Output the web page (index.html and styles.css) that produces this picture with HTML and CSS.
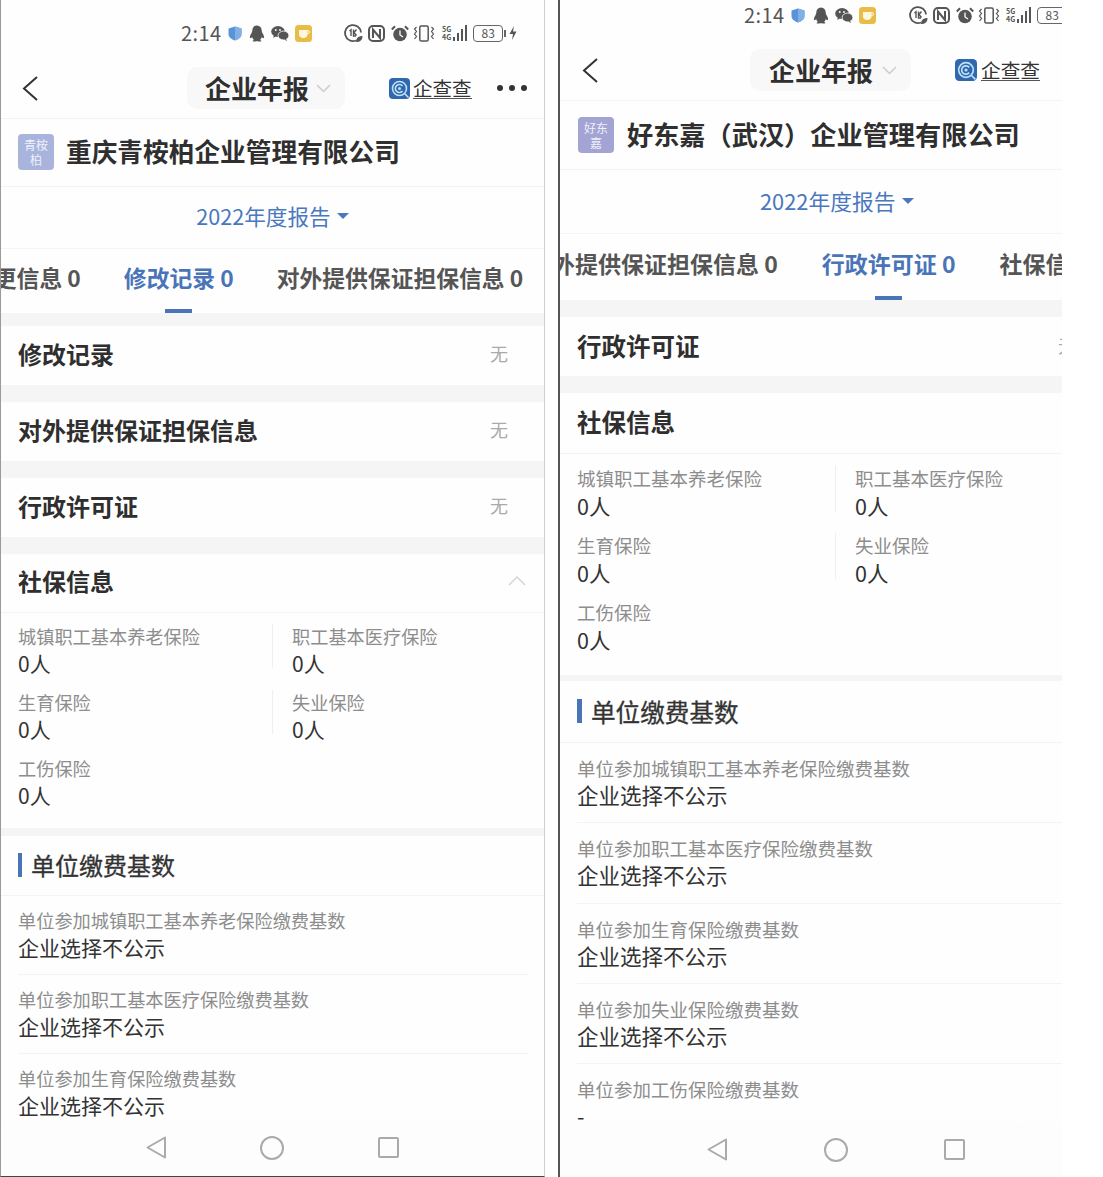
FILE: index.html
```html
<!DOCTYPE html>
<html lang="zh-CN">
<head>
<meta charset="utf-8">
<title>企业年报</title>
<link rel="stylesheet" href="styles.css">
</head>
<body>
<svg class="defs" aria-hidden="true">
  <symbol id="i-shield" viewBox="0 0 14 15"><path d="M7 .5 13.5 2.5V8c0 3.2-3 5.4-6.500 6.500C3.500 13.400.5 11.200.5 8V2.500Z" fill="#5b93d8"/><path d="M7 .5 13.500 2.500V8c0 3.200-3 5.400-6.500 6.500Z" fill="#7fb0e6"/></symbol>
  <symbol id="i-bell" viewBox="0 0 16 17"><path d="M8 .5c3 0 4.600 2.200 4.700 5 .1 1.400.6 2.300 1.300 3.600.9 1.800 1.600 3.400.6 4-.6.300-1.300-.3-1.800-1-.3 1.300-1 2.200-1.700 2.800.9.300 1.400.8 1.200 1.300-.3.500-2.500.6-3.300 0-.6.100-1.400.1-2 0-.8.600-3 .5-3.300 0-.2-.5.300-1 1.200-1.300-.7-.6-1.400-1.500-1.700-2.800-.5.700-1.200 1.300-1.800 1-1-.6-.3-2.200.6-4C2.700 7.800 3.200 6.900 3.300 5.500 3.400 2.700 5 .5 8 .5Z" fill="#555"/></symbol>
  <symbol id="i-wechat" viewBox="0 0 18 15"><ellipse cx="7" cy="5.500" rx="6.800" ry="5.400" fill="#555"/><path d="m3 9-.8 3 3.300-2Z" fill="#555"/><ellipse cx="12.500" cy="9.500" rx="5.400" ry="4.400" fill="#555" stroke="#fff" stroke-width=".8"/><path d="m15 13 1.200 2-3.200-1.500Z" fill="#555"/><circle cx="4.800" cy="4" r=".9" fill="#fff"/><circle cx="9" cy="4" r=".9" fill="#fff"/></symbol>
  <symbol id="i-coffee" viewBox="0 0 17 17"><rect width="17" height="17" rx="3.500" fill="#e9bd45"/><path d="M4 5h8.500v4.500c0 2-1.700 3.500-4.200 3.500S4 11.500 4 9.500Z" fill="#fdf6e0"/><circle cx="13" cy="7" r="1.500" fill="none" stroke="#fdf6e0"/></symbol>
  <symbol id="i-speed" viewBox="0 0 20 20"><path d="M13 17.500A8 8 0 1 1 18 9.500" fill="none" stroke="#555" stroke-width="1.800"/><path d="M6.500 8 8 6.800V13M10.500 6.500V13H13M13.500 6.500 11 9.500l2.500 3" fill="none" stroke="#555" stroke-width="1.400"/><path d="M13 19c0-4 2.500-6 6.500-6 0 4-2.500 6-6.500 6Z" fill="#555"/></symbol>
  <symbol id="i-nfc" viewBox="0 0 17 17"><rect x="1" y="1" width="15" height="15" rx="4" fill="none" stroke="#555" stroke-width="2"/><path d="M5 13V4.500L12 13V4" fill="none" stroke="#555" stroke-width="2"/></symbol>
  <symbol id="i-alarm" viewBox="0 0 18 17"><circle cx="9" cy="9.500" r="6.800" fill="#555"/><path d="M9 5.500v4.500l3 2" fill="none" stroke="#fff" stroke-width="1.300"/><path d="M.8 4.500 4 1.200M17.200 4.500 14 1.200" stroke="#555" stroke-width="2"/></symbol>
  <symbol id="i-vib" viewBox="0 0 22 17"><rect x="6.800" y="1" width="8.400" height="15" rx="1.500" fill="none" stroke="#555" stroke-width="1.500"/><path d="M3.500 2 1.500 4l2 2.500-2 2.500 2 2.500-2 2.500M18.500 2l2 2-2 2.500 2 2.500-2 2.500 2 2.500" fill="none" stroke="#555" stroke-width="1.200"/></symbol>
  <symbol id="i-bolt" viewBox="0 0 8 14"><path d="M5 0 .5 8H4L3 14l4.500-8.500H4Z" fill="#555"/></symbol>
  <symbol id="i-logo" viewBox="0 0 21 21"><rect width="21" height="21" rx="4" fill="#2f68ae"/><circle cx="10.500" cy="10.500" r="7" fill="none" stroke="#bfe0f5" stroke-width="1.600"/><path d="M13.500 8a4 4 0 1 0 0 5" fill="none" stroke="#bfe0f5" stroke-width="1.600"/><circle cx="10.500" cy="10.500" r="1.500" fill="#bfe0f5"/><path d="m15.500 15.500 4 4" stroke="#bfe0f5" stroke-width="1.600"/></symbol>
</svg>

<main class="page">

<section class="phone phone-a">
  <div class="status">
    <span class="time">2:14</span>
    <svg class="si s-shield"><use href="#i-shield"/></svg>
    <svg class="si s-bell"><use href="#i-bell"/></svg>
    <svg class="si s-wechat"><use href="#i-wechat"/></svg>
    <svg class="si s-coffee"><use href="#i-coffee"/></svg>
    <svg class="si s-speed"><use href="#i-speed"/></svg>
    <svg class="si s-nfc"><use href="#i-nfc"/></svg>
    <svg class="si s-alarm"><use href="#i-alarm"/></svg>
    <svg class="si s-vib"><use href="#i-vib"/></svg>
    <span class="net"><span class="net-t"><b>5G</b><b>4G</b></span><span class="bars"><i class="b1"></i><i class="b2"></i><i class="b3"></i><i class="b4"></i></span></span>
    <span class="batt">83</span><span class="batt-cap"></span>
    <svg class="si s-bolt"><use href="#i-bolt"/></svg>
  </div>
  <header class="nav">
    <svg class="back" viewBox="0 0 16 25"><path d="M15 1 2 12.500 15 24" fill="none" stroke="#333" stroke-width="2"/></svg>
    <div class="pill"><span>企业年报</span><svg class="pill-arrow" viewBox="0 0 15 9"><path d="M1 1l6.500 6.500L14 1" fill="none" stroke="#ccc" stroke-width="1.500"/></svg></div>
    <div class="logo"><svg class="logo-mark"><use href="#i-logo"/></svg><span>企查查</span></div>
    <div class="dots"><i></i><i></i><i></i></div>
  </header>
  <div class="company"><div class="avatar">青桉<br>柏</div><h1>重庆青桉柏企业管理有限公司</h1></div>
  <div class="report"><span>2022年度报告</span><i class="caret"></i></div>
  <nav class="tabs">
    <span class="tab">变更信息 0</span>
    <span class="tab active">修改记录 0</span>
    <span class="tab">对外提供保证担保信息 0</span>
  </nav>
  <div class="row"><h2>修改记录</h2><span class="none">无</span></div>
  <div class="row"><h2>对外提供保证担保信息</h2><span class="none">无</span></div>
  <div class="row"><h2>行政许可证</h2><span class="none">无</span></div>
  <div class="row row-open"><h2>社保信息</h2><svg class="up" viewBox="0 0 18 11"><path d="M1 10 9 2l8 8" fill="none" stroke="#d4d4d4" stroke-width="1.500"/></svg></div>
  <div class="stats">
    <div class="stat"><label>城镇职工基本养老保险</label><p>0人</p></div>
    <div class="stat"><label>职工基本医疗保险</label><p>0人</p></div>
    <div class="stat"><label>生育保险</label><p>0人</p></div>
    <div class="stat"><label>失业保险</label><p>0人</p></div>
    <div class="stat"><label>工伤保险</label><p>0人</p></div>
  </div>
  <div class="sub"><h3>单位缴费基数</h3></div>
  <div class="items">
    <div class="item"><label>单位参加城镇职工基本养老保险缴费基数</label><p>企业选择不公示</p></div>
    <div class="item"><label>单位参加职工基本医疗保险缴费基数</label><p>企业选择不公示</p></div>
    <div class="item"><label>单位参加生育保险缴费基数</label><p>企业选择不公示</p></div>
  </div>
  <div class="softnav">
    <svg class="tri" viewBox="0 0 20 23"><path d="M19 1.500 1.500 11.500 19 21.500Z" fill="none" stroke="#aaa" stroke-width="2" stroke-linejoin="round"/></svg>
    <svg class="circ" viewBox="0 0 24 24"><circle cx="12" cy="12" r="11" fill="none" stroke="#aaa" stroke-width="2"/></svg>
    <svg class="sq" viewBox="0 0 21 21"><rect x="1" y="1" width="19" height="19" rx="1" fill="none" stroke="#aaa" stroke-width="2"/></svg>
  </div>
</section>

<section class="phone phone-b">
  <div class="status">
    <span class="time">2:14</span>
    <svg class="si s-shield"><use href="#i-shield"/></svg>
    <svg class="si s-bell"><use href="#i-bell"/></svg>
    <svg class="si s-wechat"><use href="#i-wechat"/></svg>
    <svg class="si s-coffee"><use href="#i-coffee"/></svg>
    <svg class="si s-speed"><use href="#i-speed"/></svg>
    <svg class="si s-nfc"><use href="#i-nfc"/></svg>
    <svg class="si s-alarm"><use href="#i-alarm"/></svg>
    <svg class="si s-vib"><use href="#i-vib"/></svg>
    <span class="net"><span class="net-t"><b>5G</b><b>4G</b></span><span class="bars"><i class="b1"></i><i class="b2"></i><i class="b3"></i><i class="b4"></i></span></span>
    <span class="batt">83</span><span class="batt-cap"></span>
    <svg class="si s-bolt"><use href="#i-bolt"/></svg>
  </div>
  <header class="nav">
    <svg class="back" viewBox="0 0 16 25"><path d="M15 1 2 12.500 15 24" fill="none" stroke="#333" stroke-width="2"/></svg>
    <div class="pill"><span>企业年报</span><svg class="pill-arrow" viewBox="0 0 15 9"><path d="M1 1l6.500 6.500L14 1" fill="none" stroke="#ccc" stroke-width="1.500"/></svg></div>
    <div class="logo"><svg class="logo-mark"><use href="#i-logo"/></svg><span>企查查</span></div>
  </header>
  <div class="company"><div class="avatar">好东<br>嘉</div><h1>好东嘉（武汉）企业管理有限公司</h1></div>
  <div class="report"><span>2022年度报告</span><i class="caret"></i></div>
  <nav class="tabs">
    <span class="tab">对外提供保证担保信息 0</span>
    <span class="tab active">行政许可证 0</span>
    <span class="tab">社保信息 0</span>
  </nav>
  <div class="row"><h2>行政许可证</h2><span class="none">无</span></div>
  <div class="row row-open"><h2>社保信息</h2><svg class="up" viewBox="0 0 18 11"><path d="M1 10 9 2l8 8" fill="none" stroke="#d4d4d4" stroke-width="1.500"/></svg></div>
  <div class="stats">
    <div class="stat"><label>城镇职工基本养老保险</label><p>0人</p></div>
    <div class="stat"><label>职工基本医疗保险</label><p>0人</p></div>
    <div class="stat"><label>生育保险</label><p>0人</p></div>
    <div class="stat"><label>失业保险</label><p>0人</p></div>
    <div class="stat"><label>工伤保险</label><p>0人</p></div>
  </div>
  <div class="sub"><h3>单位缴费基数</h3></div>
  <div class="items">
    <div class="item"><label>单位参加城镇职工基本养老保险缴费基数</label><p>企业选择不公示</p></div>
    <div class="item"><label>单位参加职工基本医疗保险缴费基数</label><p>企业选择不公示</p></div>
    <div class="item"><label>单位参加生育保险缴费基数</label><p>企业选择不公示</p></div>
    <div class="item"><label>单位参加失业保险缴费基数</label><p>企业选择不公示</p></div>
    <div class="item"><label>单位参加工伤保险缴费基数</label><p>-</p></div>
  </div>
  <div class="softnav">
    <svg class="tri" viewBox="0 0 20 23"><path d="M19 1.500 1.500 11.500 19 21.500Z" fill="none" stroke="#aaa" stroke-width="2" stroke-linejoin="round"/></svg>
    <svg class="circ" viewBox="0 0 24 24"><circle cx="12" cy="12" r="11" fill="none" stroke="#aaa" stroke-width="2"/></svg>
    <svg class="sq" viewBox="0 0 21 21"><rect x="1" y="1" width="19" height="19" rx="1" fill="none" stroke="#aaa" stroke-width="2"/></svg>
  </div>
</section>

</main>
</body>
</html>
```
FILE: styles.css
```css
* { box-sizing: border-box; }
html, body { margin: 0; padding: 0; background: #fff; }
body { font-family: "Noto Sans CJK SC", "Noto Sans", sans-serif; color: #333; }
.defs { position: absolute; width: 0; height: 0; }

.page { display: flex; align-items: flex-start; width: 1103px; height: 1177px; overflow: hidden; }

.phone { position: relative; height: 1177px; overflow: hidden; background: #f5f5f5; flex: none; }
.phone-a { width: 545px; border-left: 1px solid #9a9a9a; border-right: 1px solid #cfcfcf; border-bottom: 1px solid #444; }
.phone-b { width: 504px; margin-left: 13px; border-left: 2px solid #555; }

/* status bar */
.status { display: flex; align-items: center; background: #fefefe; color: #555; }
.phone-a .status { height: 58px; padding: 8px 0 0 180px; }
.phone-b .status { height: 40px; padding: 0 0 10px 184px; width: 560px; }
.time { font-size: 20px; line-height: 24px; width: 40px; letter-spacing: .4px; flex: none; }
.si { display: block; flex: none; }
.s-shield { width: 14px; height: 15px; margin-left: 7px; }
.s-bell { width: 16px; height: 17px; margin-left: 7px; }
.phone-b .s-bell { margin-left: 8px; }
.s-wechat { width: 18px; height: 15px; margin-left: 6px; }
.s-coffee { width: 17px; height: 17px; margin-left: 6px; }
.s-speed { width: 20px; height: 20px; margin-left: 32px; }
.phone-a .s-speed { margin-left: 31px; }
.s-nfc { width: 17px; height: 17px; margin-left: 5px; }
.s-alarm { width: 18px; height: 17px; margin-left: 6px; }
.s-vib { width: 22px; height: 17px; margin-left: 4px; }
.s-bolt { width: 8px; height: 14px; margin-left: 3px; }
.net { display: flex; align-items: center; gap: 2px; margin-left: 6px; flex: none; }
.phone-a .net { margin-left: 7px; }
.net-t { display: flex; flex-direction: column; }
.net-t b { font-size: 7px; line-height: 8px; font-weight: 700; }
.bars { display: flex; align-items: flex-end; gap: 2px; height: 16px; }
.bars i { display: block; width: 2px; background: #555; }
.b1 { height: 4px; } .b2 { height: 8px; } .b3 { height: 12px; } .b4 { height: 16px; }
.batt { display: block; width: 30px; height: 17px; margin-left: 6px; border: 1.500px solid #666; border-radius: 4px; font-size: 12px; line-height: 14px; text-align: center; flex: none; }
.batt-cap { display: block; width: 2px; height: 7px; margin-left: 1px; background: #666; flex: none; }

/* navigation */
.nav { display: flex; align-items: center; background: #fefefe; border-bottom: 1px solid #f3f3f3; padding-left: 21px; }
.phone-a .nav { height: 61px; }
.phone-b .nav { height: 61px; padding-left: 22px; width: 560px; }
.back { width: 16px; height: 25px; flex: none; }
.pill { display: flex; align-items: center; justify-content: space-between; height: 42px; background: #f8f8f8; border-radius: 10px; font-size: 26px; font-weight: 700; color: #2f2f2f; padding: 0 14px 0 18px; flex: none; }
.pill span { padding-bottom: 2px; }
.phone-a .pill { width: 158px; margin-left: 149px; }
.phone-b .pill { width: 161px; margin-left: 152px; padding-left: 19px; }
.pill-arrow { width: 15px; height: 9px; }
.logo { display: flex; align-items: center; gap: 3px; margin-left: 44px; font-size: 19.500px; line-height: 24px; color: #333; flex: none; }
.phone-b .logo { gap: 4px; font-size: 19.700px; }
.logo span { border-bottom: 1px solid #555; line-height: 20px; }
.logo-mark { width: 21px; height: 21px; flex: none; }
.phone-b .logo-mark { width: 22px; height: 22px; }
.dots { display: flex; gap: 6px; margin-left: 25px; flex: none; }
.dots i { display: block; width: 6px; height: 6px; border-radius: 50%; background: #333; }

/* company */
.company { display: flex; align-items: center; gap: 12px; background: #fefefe; border-bottom: 1px solid #f3f3f3; padding: 0 0 1px 17px; }
.phone-a .company { height: 68px; }
.phone-b .company { height: 69px; padding-left: 18px; gap: 13px; width: 560px; }
.company h1 { margin: 0; padding-bottom: 4px; font-size: 25.700px; font-weight: 700; color: #2f2f2f; white-space: nowrap; }
.phone-b .company h1 { font-size: 26.200px; padding-bottom: 2px; }
.avatar { width: 36px; height: 36px; border-radius: 4px; background: #a9b4dc; color: #eef0fa; font-size: 12px; line-height: 15px; text-align: center; padding-top: 3px; flex: none; }
.phone-b .avatar { background: #a3a3d4; }

/* report */
.report { display: flex; align-items: center; justify-content: center; gap: 6px; background: #fefefe; border-bottom: 1px solid #f5f5f5; color: #4a78bf; font-size: 21.600px; }
.phone-a .report { height: 62px; padding-bottom: 4px; }
.phone-b .report { height: 64px; width: 560px; justify-content: flex-start; padding: 0 0 2px 200px; font-size: 21.800px; }
.caret { display: block; width: 0; height: 0; border-left: 6px solid transparent; border-right: 6px solid transparent; border-top: 6px solid #4a78bf; margin-top: 1px; }

/* tabs */
.tabs { display: flex; gap: 43px; background: #fefefe; white-space: nowrap; font-size: 23px; font-weight: 700; color: #555; }
.phone-a .tabs { height: 64px; margin-bottom: 13px; font-size: 22.800px; }
.phone-b .tabs { height: 66px; margin-bottom: 17px; width: 900px; gap: 44px; }
.phone-a .tab:first-child { margin-left: -30px; }
.phone-b .tab:first-child { margin-left: -31px; }
.tab { position: relative; line-height: 58px; flex: none; }
.tab.active { color: #4a74b8; }
.tab.active::after { content: ""; position: absolute; left: 50%; bottom: 0; width: 27px; height: 4px; margin-left: -14px; background: #4a74b8; }

/* rows */
.row { display: flex; align-items: center; justify-content: space-between; height: 59px; background: #fefefe; margin-bottom: 17px; padding: 0 36px 5px 17px; }
.phone-b .row { height: 59px; width: 556px; padding: 0 40px 3px 17px; }
.row h2 { margin: 0; font-size: 24px; font-weight: 700; color: #2f2f2f; }
.phone-b .row h2 { font-size: 24.500px; }
.none { font-size: 18px; color: #aaa; }
.row-open { margin-bottom: 0; border-bottom: 1px solid #f3f3f3; padding-right: 18px; }
.phone-b .row-open { height: 61px; padding-right: 18px; }
.up { width: 18px; height: 11px; }

/* social insurance stats */
.stats { display: grid; grid-template-columns: 254px 1fr; row-gap: 12px; background: #fefefe; padding: 11px 0 18px 17px; margin-bottom: 8px; }
.phone-b .stats { grid-template-columns: 258px 1fr; row-gap: 11px; padding: 12px 0 19px 17px; margin-bottom: 6px; width: 560px; }
.stat:nth-child(even) { border-left: 1px solid #efefef; padding-left: 19px; height: 44px; }
.stat label, .item label { display: block; font-size: 18.200px; line-height: 24px; color: #8d8d8d; white-space: nowrap; }
.stat p, .item p { margin: 0; font-size: 21px; line-height: 30px; color: #333; white-space: nowrap; }
.phone-b .stat label, .phone-b .item label { font-size: 18.500px; }
.phone-b .stat p, .phone-b .item p { font-size: 21.500px; }
.phone-b .stat p { line-height: 32px; }
.phone-b .stat:nth-child(even) { height: 46px; }

/* sub heading */
.sub { display: flex; align-items: center; height: 60px; background: #fefefe; border-bottom: 1px solid #f3f3f3; padding: 0 0 1px 17px; }
.phone-b .sub { height: 62px; padding-left: 17px; width: 560px; }
.sub h3 { margin: 0; padding-left: 9px; border-left: 4px solid #4a74b8; font-size: 24px; line-height: 24px; font-weight: 400; -webkit-text-stroke: .3px #333; color: #333; }
.sub h3 { position: static; }
.phone-b .sub h3 { font-size: 24.600px; border-left-width: 5px; padding-left: 9px; }

/* items */
.items { background: #fefefe; padding: 0 16px 0 17px; height: 500px; }
.phone-b .items { padding: 0 0 0 17px; width: 560px; }
.item { height: 79px; padding-top: 12px; border-bottom: 1px solid #f3f3f3; }
.phone-b .item { height: 80.250px; padding-top: 13px; }

/* soft keys */
.softnav { position: absolute; left: 0; right: 0; bottom: 0; height: 58px; background: linear-gradient(#fdfdfe00, #fdfdfe 8px); }
.softnav svg { position: absolute; }
.tri { width: 20px; height: 23px; }
.circ { width: 24px; height: 24px; }
.sq { width: 21px; height: 21px; }
.phone-a .tri { left: 145px; top: 18px; }
.phone-a .circ { left: 259px; top: 18px; }
.phone-a .sq { left: 377px; top: 19px; }
.phone-b .tri { left: 147px; top: 19px; }
.phone-b .circ { left: 264px; top: 19px; }
.phone-b .sq { left: 384px; top: 20px; }
```
